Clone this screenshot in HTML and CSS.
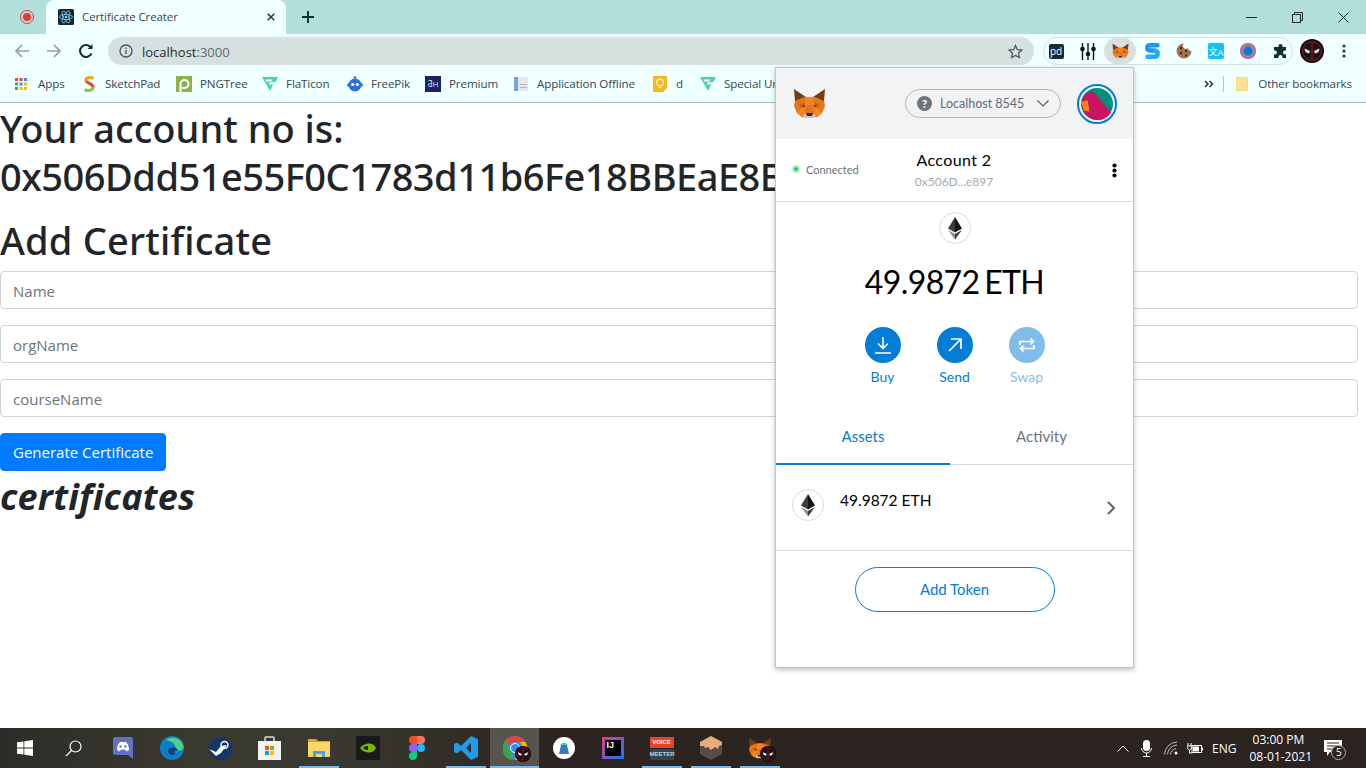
FILE: index.html
```html
<!DOCTYPE html>
<html>
	<head>
		<meta charset="utf-8">
		<title>Certificate Creater</title>
		<link rel="stylesheet" href="styles.css">
	</head>
	<body>
		<svg class="defs" width="0" height="0">
			<symbol id="fox" viewBox="0 0 33 31">
				<polygon points="1,1 13,9 11,14 2,13" fill="#763d16"/>
				<polygon points="32,1 20,9 22,14 31,13" fill="#763d16"/>
				<polygon points="2,13 1,18 4,25 9,29 24,29 29,25 32,18 31,13 22,9 11,9" fill="#e2761b"/>
				<polygon points="13,9 20,9 21,17 12,17" fill="#f6851b"/>
				<polygon points="4,25 9,18 13,17 12,25 9,29" fill="#f6851b"/>
				<polygon points="29,25 24,18 20,17 21,25 24,29" fill="#f6851b"/>
				<polygon points="6,16 12,15 12,19 8,20" fill="#cd6116"/>
				<polygon points="27,16 21,15 21,19 25,20" fill="#cd6116"/>
				<polygon points="9,18 12,17 11,19" fill="#233447"/>
				<polygon points="24,18 21,17 22,19" fill="#233447"/>
				<polygon points="10,27 14,25 19,25 23,27 21,30 12,30" fill="#d7c1b3"/>
				<polygon points="13,25 20,25 19,28 14,28" fill="#233447"/>
			</symbol>
			<symbol id="eth" viewBox="0 0 32 32">
				<circle cx="16" cy="16" r="15.500" fill="#fff" stroke="#d6d9dc"/>
				<polygon points="16,5 9,16.500 16,20.500" fill="#3c3c3d"/>
				<polygon points="16,5 23,16.500 16,20.500" fill="#141414"/>
				<polygon points="9,18 16,27.500 16,22" fill="#8c8c8c"/>
				<polygon points="23,18 16,27.500 16,22" fill="#3c3c3b"/>
			</symbol>
			<symbol id="deadpool" viewBox="0 0 24 24">
				<circle cx="12" cy="12" r="12" fill="#0d0a0c"/>
				<circle cx="12" cy="12" r="9.500" fill="#1c1114" stroke="#6e1420" stroke-width="1.500"/>
				<rect x="11" y="2" width="2" height="20" fill="#6e1420"/>
				<polygon points="4.500,9.500 10,12 9,14.500 5.500,13" fill="#fff"/>
				<polygon points="19.500,9.500 14,12 15,14.500 18.500,13" fill="#fff"/>
			</symbol>
		</svg>

		<div class="tabstrip">
			<div class="rec-tab"><span class="rec-dot"></span></div>
			<div class="tab">
				<svg class="favicon" width="16" height="16" viewBox="0 0 16 16">
					<rect width="16" height="16" rx="1.500" fill="#20232a"/>
					<g fill="none" stroke="#61dafb" stroke-width=".8">
						<ellipse cx="8" cy="8" rx="6.500" ry="2.600"/>
						<ellipse cx="8" cy="8" rx="6.500" ry="2.600" transform="rotate(60 8 8)"/>
						<ellipse cx="8" cy="8" rx="6.500" ry="2.600" transform="rotate(120 8 8)"/>
					</g>
					<circle cx="8" cy="8" r="1.300" fill="#61dafb"/>
				</svg>
				<span class="tab-title">Certificate Creater</span>
				<svg class="tab-close" width="8" height="8" viewBox="0 0 8 8"><path d="M.7.7l6.600 6.600M7.300.7L.7 7.300" stroke="#263a3a" stroke-width="1.600"/></svg>
			</div>
			<svg class="new-tab" width="12" height="12" viewBox="0 0 12 12"><path d="M6 0v12M0 6h12" stroke="#0f2e2e" stroke-width="2"/></svg>
			<div class="win-btns">
				<div class="win-btn"><svg width="11" height="11" viewBox="0 0 11 11"><path d="M0 5.500h11" stroke="#1c2b2b"/></svg></div>
				<div class="win-btn"><svg width="11" height="11" viewBox="0 0 11 11" fill="none" stroke="#1c2b2b"><rect x=".5" y="2.500" width="8" height="8"/><path d="M2.500 2.500v-2h8v8h-2"/></svg></div>
				<div class="win-btn"><svg width="11" height="11" viewBox="0 0 11 11"><path d="M.5.5l10 10M10.500.5l-10 10" stroke="#1c2b2b"/></svg></div>
			</div>
		</div>

		<div class="toolbar">
			<div class="nav-btn"><svg width="16" height="16" viewBox="0 0 16 16" fill="none" stroke="#8fa3a1" stroke-width="1.700"><path d="M15 8H2M8 2L2 8l6 6"/></svg></div>
			<div class="nav-btn"><svg width="16" height="16" viewBox="0 0 16 16" fill="none" stroke="#8fa3a1" stroke-width="1.700"><path d="M1 8h13M8 2l6 6-6 6"/></svg></div>
			<div class="nav-btn"><svg width="16" height="16" viewBox="0 0 16 16" fill="none" stroke="#0f2e2e" stroke-width="2"><path d="M13.500 10.500A6 6 0 1 1 13 4.500"/><path d="M14.500 1v5h-5z" fill="#0f2e2e" stroke="none"/></svg></div>
			<div class="omnibox">
				<svg width="14" height="14" viewBox="0 0 14 14" fill="none" stroke="#46565a" stroke-width="1.300"><circle cx="7" cy="7" r="6"/><path d="M7 6v4.200M7 3.600v1.400"/></svg>
				<span class="url">localhost<span class="url-port">:3000</span></span>
				<svg class="star" width="15" height="15" viewBox="0 0 16 16" fill="none" stroke="#46565a" stroke-width="1.300"><path d="M8 1.500l2 4.500 4.800.5-3.600 3.200 1 4.800L8 12.200l-4.200 2.300 1-4.800L1.200 6.500 6 6z"/></svg>
			</div>
			<div class="ext-pill">
				<div class="ext"><span class="ext-pd">pd</span></div>
				<div class="ext"><svg width="16" height="17" viewBox="0 0 16 17" stroke="#111" stroke-width="1.400"><path d="M2.500 0v17M8 0v17M13.500 0v17"/><circle cx="2.500" cy="6" r="1.600" fill="#111"/><circle cx="8" cy="11" r="1.600" fill="#111"/><circle cx="13.500" cy="6" r="1.600" fill="#111"/></svg></div>
				<div class="ext ext-active"><svg width="17" height="16"><use href="#fox"/></svg></div>
				<div class="ext"><svg width="15" height="16" viewBox="0 0 15 16" fill="none" stroke-width="4.400" stroke-linecap="round"><path d="M12.500 2.300H5Q2.300 2.300 2.300 4.800T5 7.500h5" stroke="#1e96f0"/><path d="M10 8q2.700 0 2.700 2.700T10 13.700H2.500" stroke="#28a8f5"/></svg></div>
				<div class="ext"><svg width="16" height="16" viewBox="0 0 16 16"><path d="M8 .5A7.500 7.500 0 1 0 15.500 8 3 3 0 0 1 12 5 3 3 0 0 1 8 .5z" fill="#a86f4c"/><g fill="#3a2417"><circle cx="5" cy="5" r="1.200"/><circle cx="10" cy="8" r="1.200"/><circle cx="5" cy="10" r="1.200"/><circle cx="10" cy="12.500" r="1"/></g></svg></div>
				<div class="ext"><span class="ext-trans"><span class="trans-zh">文</span><span class="trans-a">A</span></span></div>
				<div class="ext"><span class="ext-orb"></span></div>
				<div class="ext"><svg width="15" height="15" viewBox="0 0 15 15"><path d="M5.500 3V2a2 2 0 0 1 4 0v1H13v3.500h-1a2 2 0 0 0 0 4h1V14H9.500v-1a2 2 0 0 0-4 0v1H1v-3.500h1a2 2 0 0 0 0-4H1V3z" fill="#0f2e2e"/></svg></div>
			</div>
			<svg class="profile" width="24" height="24"><use href="#deadpool"/></svg>
			<svg class="menu-dots" width="4" height="14" viewBox="0 0 4 14" fill="#263a3a"><circle cx="2" cy="2" r="1.600"/><circle cx="2" cy="7" r="1.600"/><circle cx="2" cy="12" r="1.600"/></svg>
		</div>

		<div class="bookmarks">
			<div class="bm-list">
				<div class="bm">
					<svg width="12" height="12" viewBox="0 0 12 12"><g fill="#ea4335"><rect width="3" height="3"/><rect x="4.500" width="3" height="3"/></g><rect x="9" width="3" height="3" fill="#4285f4"/><rect y="4.500" width="3" height="3" fill="#34a853"/><rect x="4.500" y="4.500" width="3" height="3" fill="#4285f4"/><rect x="9" y="4.500" width="3" height="3" fill="#fbbc05"/><rect y="9" width="3" height="3" fill="#34a853"/><rect x="4.500" y="9" width="3" height="3" fill="#fbbc05"/><rect x="9" y="9" width="3" height="3" fill="#fbbc05"/></svg>
					<span>Apps</span>
				</div>
				<div class="bm">
					<svg width="12" height="16" viewBox="0 0 12 16" fill="none" stroke-width="3"><path d="M10.500 2.500C6 0 2 2 3 5" stroke="#f5a11c"/><path d="M3 5c1 2 7 3 7 6" stroke="#e8452c"/><path d="M10 11c0 4-6 4-8.500 2.500" stroke="#8cc43c"/></svg>
					<span>SketchPad</span>
				</div>
				<div class="bm">
					<svg width="16" height="16" viewBox="0 0 16 16"><rect width="16" height="16" fill="#8ab34a"/><path d="M4.500 16V8a4 4 0 1 1 4 4H6" fill="none" stroke="#fff" stroke-width="2"/></svg>
					<span>PNGTree</span>
				</div>
				<div class="bm">
					<svg width="16" height="16" viewBox="0 0 16 16"><path d="M0 1h16l-2.500 5H8L6.500 8.500H11L8 15z" fill="#40d9a0"/><path d="M3.500 3.500h7L9 5.500H4.500z" fill="#fff"/></svg>
					<span>FlaTicon</span>
				</div>
				<div class="bm">
					<svg width="16" height="16" viewBox="0 0 16 16"><circle cx="8" cy="9" r="6.500" fill="#2a6fdb"/><circle cx="8" cy="1.500" r="1.300" fill="#2a6fdb"/><rect x="0" y="7.500" width="16" height="3" rx="1.500" fill="#2a6fdb"/><circle cx="5.700" cy="8.500" r="1.600" fill="#fff"/><circle cx="10.300" cy="8.500" r="1.600" fill="#fff"/></svg>
					<span>FreePik</span>
				</div>
				<div class="bm">
					<span class="bm-dh">ƋH</span>
					<span>Premium</span>
				</div>
				<div class="bm">
					<svg width="16" height="16" viewBox="0 0 16 16"><rect x="1" y="1" width="14" height="14" fill="#e4e8ee"/><rect x="1" y="1" width="4" height="14" fill="#6ea6dc"/><rect x="7" y="8" width="7" height="1" fill="#b3bcc6"/><rect x="7" y="11" width="7" height="1" fill="#b3bcc6"/></svg>
					<span>Application Offline</span>
				</div>
				<div class="bm">
					<svg width="16" height="16" viewBox="0 0 16 16"><path d="M1 0h14v12l-4 4H1z" fill="#f6b81a"/><circle cx="8" cy="6.500" r="3.300" fill="none" stroke="#fff" stroke-width="1.200"/><path d="M6.500 11.500h3" stroke="#fff" stroke-width="1.200"/></svg>
					<span>d</span>
				</div>
				<div class="bm">
					<svg width="16" height="16" viewBox="0 0 16 16"><path d="M0 1h16l-2.500 5H8L6.500 8.500H11L8 15z" fill="#40d9a0"/><path d="M3.500 3.500h7L9 5.500H4.500z" fill="#fff"/></svg>
					<span>Special Ur</span>
				</div>
			</div>
			<div class="bm-right">
				<svg width="10" height="8" viewBox="0 0 10 8" fill="none" stroke="#263a3a" stroke-width="1.600"><path d="M1 1l3 3-3 3M5.500 1l3 3-3 3"/></svg>
				<span class="bm-sep"></span>
				<div class="bm">
					<svg width="12" height="14" viewBox="0 0 12 14"><path d="M0 0h10l2 2v12H0z" fill="#fde293" stroke="#f0c85a" stroke-width=".6"/></svg>
					<span>Other bookmarks</span>
				</div>
			</div>
		</div>

		<div class="page">
			<h1 class="heading">
				<span class="heading-line">Your account no is:</span>
				<span class="heading-line heading-addr">0x506Ddd51e55F0C1783d11b6Fe18BBEaE8E</span>
			</h1>
			<h1 class="heading add-title">Add Certificate</h1>
			<input class="field" type="text" placeholder="Name">
			<input class="field" type="text" placeholder="orgName">
			<input class="field" type="text" placeholder="courseName">
			<button class="generate">Generate Certificate</button>
			<h1 class="certs-title">certificates</h1>
		</div>

		<div class="mm-popup">
			<div class="mm-header">
				<svg class="mm-logo" width="33" height="31"><use href="#fox"/></svg>
				<div class="mm-network">
					<span class="mm-help">?</span>
					<span>Localhost 8545</span>
					<svg width="12" height="7" viewBox="0 0 12 7" fill="none" stroke="#555" stroke-width="1.100"><path d="M.5.5L6 6l5.500-5.500"/></svg>
				</div>
				<div class="mm-avatar">
					<svg width="32" height="32" viewBox="0 0 34 34">
						<circle cx="17" cy="17" r="17" fill="#008f7f"/>
						<path d="M3 8L12 3l20 23a17 17 0 0 1-15 8A17 17 0 0 1 1 14z" fill="#c9145f"/>
						<path d="M0 15l7-2 2 12-6-1z" fill="#f5890f"/>
					</svg>
				</div>
			</div>
			<div class="mm-account">
				<div class="mm-connected"><span class="mm-dot"></span>Connected</div>
				<div class="mm-acc-name">
					<div class="mm-acc-title">Account 2</div>
					<div class="mm-acc-addr">0x506D...e897</div>
				</div>
				<svg class="mm-more" width="5" height="15" viewBox="0 0 5 15"><circle cx="2.500" cy="2.500" r="2.100"/><circle cx="2.500" cy="7.500" r="2.100"/><circle cx="2.500" cy="12.500" r="2.100"/></svg>
			</div>
			<div class="mm-balance">
				<svg width="32" height="32"><use href="#eth"/></svg>
				<div class="mm-amount">49.9872 ETH</div>
				<div class="mm-actions">
					<div class="mm-action">
						<span class="mm-round"><svg width="16" height="17" viewBox="0 0 16 17" fill="none" stroke="#fff" stroke-width="1.600"><path d="M8 0v11M3 6.500l5 5 5-5M0 16h16"/></svg></span>
						Buy
					</div>
					<div class="mm-action">
						<span class="mm-round"><svg width="14" height="14" viewBox="0 0 14 14" fill="none" stroke="#fff" stroke-width="1.700"><path d="M1 13L13 1M3 1h10v10"/></svg></span>
						Send
					</div>
					<div class="mm-action mm-disabled">
						<span class="mm-round"><svg width="16" height="14" viewBox="0 0 16 14" fill="none" stroke="#fff" stroke-width="1.700"><path d="M1 7V3.500h13M11.500.5l3 3-3 3M15 7v3.500H2M4.500 7.500l-3 3 3 3"/></svg></span>
						Swap
					</div>
				</div>
			</div>
			<div class="mm-tabs">
				<div class="mm-tab mm-tab-on">Assets</div>
				<div class="mm-tab">Activity</div>
			</div>
			<div class="mm-asset">
				<svg width="32" height="32"><use href="#eth"/></svg>
				<span class="mm-asset-text">49.9872 ETH</span>
				<svg class="mm-chevron" width="9" height="14" viewBox="0 0 9 14" fill="none" stroke="#5f6b7a" stroke-width="2.200"><path d="M1 1l6 6-6 6"/></svg>
			</div>
			<div class="mm-add-wrap">
				<div class="mm-add">Add Token</div>
			</div>
		</div>

		<div class="taskbar">
			<div class="tb-start"><svg width="16" height="16" viewBox="0 0 16 16" fill="#fff"><path d="M0 2.300l6.500-.9v6.200H0zM7.300 1.300L16 0v7.600H7.300zM0 8.400h6.500v6.200L0 13.700zM7.300 8.400H16V16l-8.700-1.300z"/></svg></div>
			<div class="tb-item"><svg width="17" height="17" viewBox="0 0 17 17" fill="none" stroke="#fff" stroke-width="1.200"><circle cx="10.500" cy="6.500" r="5.500"/><path d="M6.500 10.500L.8 16.200"/></svg></div>
			<div class="tb-item"><svg width="20" height="22" viewBox="0 0 20 22"><path d="M2 0h16q2 0 2 2v20l-5-4H2q-2 0-2-2V2q0-2 2-2z" fill="#5f72c4"/><path d="M4 13q0-5 3-8h6q3 3 3 8-2 1.500-3 1l-1-1.500H8L7 14q-1 .5-3-1z" fill="#fff"/><circle cx="7.500" cy="9.500" r="1.200" fill="#5f72c4"/><circle cx="12.500" cy="9.500" r="1.200" fill="#5f72c4"/></svg></div>
			<div class="tb-item"><svg width="24" height="24" viewBox="0 0 24 24"><circle cx="12" cy="12" r="12" fill="#0c7fc4"/><path d="M6 4a11 11 0 0 1 17.500 6c1 5-6 6-8 3 1-6-6-8-9.500-9z" fill="#4fd08a"/><path d="M8 15c0-4 8-5 10-1-3 0-5 1-3 5-4 0-7-1-7-4z" fill="#123f7a"/></svg></div>
			<div class="tb-item"><svg width="23" height="23" viewBox="0 0 23 23"><circle cx="11.500" cy="11.500" r="11.500" fill="#12356a"/><path d="M0 12l7 3 5-6 6-1-6 8-5 3z" fill="#fff"/><circle cx="15.500" cy="8" r="3.500" fill="none" stroke="#fff" stroke-width="1.400"/></svg></div>
			<div class="tb-item"><svg width="23" height="24" viewBox="0 0 23 24"><path d="M7 5V2q0-1 1-1h7q1 0 1 1v3" fill="none" stroke="#ddd" stroke-width="1.500"/><path d="M0 5h23v19H0z" fill="#f2f2f2"/><rect x="7" y="10" width="4" height="4" fill="#f25022"/><rect x="12" y="10" width="4" height="4" fill="#7fba00"/><rect x="7" y="15" width="4" height="4" fill="#00a4ef"/><rect x="12" y="15" width="4" height="4" fill="#ffb900"/></svg></div>
			<div class="tb-item tb-open"><svg width="22" height="18" viewBox="0 0 22 18"><path d="M0 0h8l2 2h12v3H0z" fill="#e0a526"/><path d="M0 3h22v15H0z" fill="#fcd667"/><path d="M5 18v-6h12v6h-3v-3H8v3z" fill="#4aa3df"/></svg></div>
			<div class="tb-item"><svg width="24" height="24" viewBox="0 0 24 24"><rect width="24" height="24" fill="#1a1a1a"/><path d="M4 12q4-5 10-4.500v9Q8 17 4 12z" fill="#76b900"/><path d="M7 12q3-2.500 5-2v4q-2 .5-5-2z" fill="#1a1a1a"/><path d="M14 7.500q4 .5 6 4.500-2 4-6 4.500z" fill="#76b900"/></svg></div>
			<div class="tb-item"><svg width="16" height="24" viewBox="0 0 16 24"><path d="M8 0H4a4 4 0 0 0 0 8h4z" fill="#f24e1e"/><path d="M8 0h4a4 4 0 0 1 0 8H8z" fill="#ff7262"/><path d="M8 8H4a4 4 0 0 0 0 8h4z" fill="#a259ff"/><circle cx="12" cy="12" r="4" fill="#1abcfe"/><path d="M8 16H4a4 4 0 1 0 4 4z" fill="#0acf83"/></svg></div>
			<div class="tb-item tb-open"><svg width="24" height="24" viewBox="0 0 24 24"><path d="M17 0l7 3v18l-7 3L7 14l-4 3.500L0 16V8l3-1.500L7 10zM17 7l-5 5 5 5z" fill="#1f9cf0"/></svg></div>
			<div class="tb-item tb-open tb-active">
				<svg width="24" height="24" viewBox="0 0 24 24"><circle cx="12" cy="12" r="12" fill="#4285f4"/><path d="M12 0a12 12 0 0 1 10.400 6H12a6 6 0 0 0-5.400 3.300L2.500 4.500A12 12 0 0 1 12 0z" fill="#ea4335"/><path d="M2.500 4.500l4.600 8a6 6 0 0 0 4 5.500L8 24A12 12 0 0 1 2.500 4.500z" fill="#34a853"/><path d="M22.400 6A12 12 0 0 1 12 24l5-9a6 6 0 0 0 0-9z" fill="#fbbc05"/><circle cx="12" cy="12" r="4.500" fill="#4285f4" stroke="#fff"/></svg>
				<svg class="tb-badge" width="16" height="16"><use href="#deadpool"/></svg>
			</div>
			<div class="tb-item"><svg width="22" height="22" viewBox="0 0 22 22"><circle cx="11" cy="11" r="11" fill="#fff"/><path d="M6 17l2-9h6l2 9z" fill="#3a77c4"/><path d="M7 8q4-5 8 0z" fill="#3ddc84"/></svg></div>
			<div class="tb-item"><span class="tb-ij"><span class="tb-ij-in">IJ</span></span></div>
			<div class="tb-item tb-open"><div class="tb-voice"><span class="tb-voice-a">VOICE</span><span class="tb-voice-b">MEETER</span></div></div>
			<div class="tb-item tb-open"><svg width="22" height="24" viewBox="0 0 22 24"><path d="M11 0l11 6v12l-11 6L0 18V6z" fill="#5b4a4a"/><path d="M11 0l11 6v3l-3 1-1 3-3-2-4 3-3-3-3 1-1-2H0V6z" fill="#e3ae77"/></svg></div>
			<div class="tb-item tb-open">
				<svg width="24" height="22"><use href="#fox"/></svg>
				<svg class="tb-badge" width="16" height="16"><use href="#deadpool"/></svg>
			</div>
			<div class="tray">
				<svg class="tray-chev" width="12" height="7" viewBox="0 0 12 7" fill="none" stroke="#fff"><path d="M.5 6.500L6 1l5.500 5.500"/></svg>
				<svg class="tray-mic" width="11" height="17" viewBox="0 0 11 17"><rect x="2" y="0" width="7" height="11" rx="3.500" fill="#fff"/><path d="M.5 8a5 5 0 0 0 10 0M5.500 13v3M2 16.500h7" fill="none" stroke="#fff"/></svg>
				<svg class="tray-wifi" width="14" height="14" viewBox="0 0 14 14" fill="none" stroke="#bbb"><path d="M.5 13.500A13 13 0 0 1 13 1M3.500 13.500A10 10 0 0 1 13 4M6.500 13.500A7 7 0 0 1 12 7.500"/><circle cx="12" cy="12" r="1.500" fill="#fff" stroke="none"/></svg>
				<svg class="tray-batt" width="16" height="11" viewBox="0 0 16 11"><path d="M1 0v3M4 0v3M0 3h5v2L2.500 7 0 5zM2.500 7v3h3" fill="none" stroke="#fff"/><rect x="5" y="2.500" width="9.500" height="7" fill="none" stroke="#fff"/><rect x="6" y="3.500" width="6" height="5" fill="#fff"/><rect x="15" y="4.500" width="1" height="3" fill="#fff"/></svg>
				<span class="tray-lang">ENG</span>
				<div class="tray-clock">
					<div>03:00 PM</div>
					<div>08-01-2021</div>
				</div>
				<div class="tray-notif">
					<svg width="18" height="16" viewBox="0 0 18 16"><path d="M0 0h18v12H6l-3 4v-4H0z" fill="#fff"/><path d="M3 3h12M3 6h12M3 9h8" stroke="#2a2320"/></svg>
					<span class="notif-count">5</span>
				</div>
			</div>
		</div>
	</body>
</html>
```

FILE: styles.css
```css
* {
	box-sizing: border-box;
}

html, body {
	margin: 0;
	padding: 0;
	height: 768px;
	overflow: hidden;
	background: #fff;
}

body {
	display: flex;
	flex-direction: column;
	position: relative;
	font-family: "Open Sans", "Noto Sans", sans-serif;
}

.defs {
	position: absolute;
}

svg {
	display: block;
	flex-shrink: 0;
}

/* tabs */
.tabstrip {
	display: flex;
	align-items: center;
	height: 34px;
	background: #b2dfdb;
}

.rec-tab {
	display: flex;
	justify-content: center;
	align-items: center;
	width: 46px;
	padding-left: 8px;
}

.rec-dot {
	width: 14px;
	height: 14px;
	padding: 2px;
	border-radius: 50%;
	border: 1px solid #e53935;
	background: #e53935;
	background-clip: content-box;
}

.tab {
	display: flex;
	align-items: center;
	align-self: flex-end;
	width: 240px;
	height: 34px;
	padding: 0 11px 0 12px;
	background: #f0ffff;
	border-radius: 8px 8px 0 0;
}

.tab-title {
	flex: 1;
	margin: 0 0 2px 8px;
	font-size: 11.5px;
	letter-spacing: -.1px;
	color: #37474f;
}

.new-tab {
	margin-left: 16px;
}

.win-btns {
	display: flex;
	margin-left: auto;
}

.win-btn {
	display: flex;
	justify-content: center;
	align-items: center;
	width: 46px;
	height: 28px;
}

/* toolbar */
.toolbar {
	display: flex;
	align-items: center;
	height: 34px;
	padding-left: 6px;
	background: #f0ffff;
}

.nav-btn {
	display: flex;
	justify-content: center;
	width: 32px;
}

.omnibox {
	display: flex;
	align-items: center;
	width: 926px;
	height: 28px;
	margin-left: 6px;
	padding: 0 11px;
	background: #d5e0df;
	border-radius: 14px;
}

.url {
	margin: 1px 0 0 9px;
	font-size: 13px;
	color: #202f33;
}

.url-port {
	color: #5a6b70;
}

.star {
	margin-left: auto;
}

.ext-pill {
	display: flex;
	justify-content: center;
	align-items: center;
	width: 250px;
	height: 28px;
	margin-left: 9px;
	border: 1px solid #d5e0df;
	border-radius: 14px;
}

.ext {
	display: flex;
	justify-content: center;
	align-items: center;
	flex-shrink: 0;
	width: 32px;
	height: 28px;
}

.ext-active {
	background: #d5e0df;
	border-radius: 50%;
}

.ext-pd {
	display: block;
	width: 15px;
	height: 15px;
	background: #16293d;
	border-radius: 2px;
	color: #fff;
	font-size: 10px;
	line-height: 14px;
	text-align: center;
}

.ext-trans {
	display: flex;
	align-items: center;
	justify-content: center;
	width: 16px;
	height: 16px;
	background: #16c1f3;
	border-radius: 2px;
	color: #fff;
	font-size: 9px;
	font-family: "Noto Sans CJK SC", sans-serif;
	overflow: hidden;
}

.trans-a {
	font-family: "Liberation Sans", sans-serif;
	margin-top: 4px;
}

.ext-orb {
	display: block;
	width: 16px;
	height: 16px;
	border-radius: 50%;
	background: radial-gradient(circle closest-side at 50% 50%, #0e70c9 40%, #3fa3e8 65%, #f06a3a 82%, #b040c0 100%);
}

.profile {
	margin-left: 7px;
}

.menu-dots {
	margin-left: 18px;
}

/* bookmarks */
.bookmarks {
	display: flex;
	align-items: center;
	height: 35px;
	padding: 0 0 2px 15px;
	background: #f0ffff;
	border-bottom: 1px solid #a9bcbc;
	font-size: 11.6px;
	letter-spacing: -.1px;
	color: #37474f;
}

.bm-list {
	display: grid;
	grid-template-columns: 68px 93px 86px 85px 78px 88px 139px 48px 100px;
}

.bm {
	display: flex;
	align-items: center;
	gap: 8px;
	white-space: nowrap;
}

.bm span {
	margin-bottom: 1px;
}

.bm:first-child {
	gap: 11px;
}

.bm:nth-child(2) {
	gap: 10px;
}

.bm .bm-dh {
	display: block;
	width: 16px;
	height: 16px;
	margin: 0;
	background: #1a2366;
	color: #dfe3f5;
	font-size: 8px;
	line-height: 16px;
	text-align: center;
}

.bm-right {
	display: flex;
	align-items: center;
	margin-left: auto;
	padding-right: 14px;
}

.bm-sep {
	width: 1px;
	height: 16px;
	margin: 0 12px 0 9px;
	background: #b6c4c4;
}

.bm-right .bm {
	gap: 10px;
}

/* page */
.page {
	flex: 1;
	padding-right: 8px;
	color: #212529;
}

.heading {
	margin: 1px 0 16px;
	font-family: "Noto Sans", sans-serif;
	font-size: 38px;
	font-weight: 500;
	line-height: 48px;
}

.heading-line {
	display: block;
	white-space: nowrap;
}

.heading-addr {
	letter-spacing: -.5px;
}

.add-title {
	margin: 0 0 7px;
	letter-spacing: .2px;
}

.field {
	display: block;
	width: 100%;
	height: 38px;
	margin-bottom: 16px;
	padding: 7px 12px 5px;
	border: 1px solid #ced4da;
	border-radius: 4px;
	font-family: inherit;
	font-size: 15px;
	color: #495057;
}

.field::placeholder {
	color: #6c757d;
}

.generate {
	display: block;
	height: 38px;
	padding: 0 12px;
	border: 1px solid #007bff;
	border-radius: 4px;
	background: #007bff;
	font-family: inherit;
	font-size: 15px;
	color: #fff;
}

.certs-title {
	margin: 2px 0 0;
	font-size: 36px;
	font-style: italic;
	font-weight: 700;
	letter-spacing: .2px;
	line-height: 48px;
}

/* metamask popup */
.mm-popup {
	position: absolute;
	left: 775px;
	top: 67px;
	width: 359px;
	height: 601px;
	background: #fff;
	border: 1px solid #bfc4c4;
	box-shadow: 0 2px 5px rgba(0, 0, 0, .25);
	font-family: Lato, sans-serif;
	color: #000;
}

.mm-header {
	display: flex;
	align-items: center;
	height: 71px;
	padding: 0 16px 0 17px;
	background: #f2f3f4;
}

.mm-network {
	display: flex;
	align-items: center;
	gap: 8px;
	width: 156px;
	height: 29px;
	margin-left: auto;
	padding: 0 11px;
	border: 1px solid #b4b8bc;
	border-radius: 15px;
	font-size: 12.5px;
	white-space: nowrap;
	color: #5f6b7a;
}

.mm-network svg {
	margin-left: auto;
}

.mm-help {
	flex: none;
	width: 15px;
	height: 15px;
	border-radius: 50%;
	background: #6f7479;
	color: #fff;
	font-size: 11px;
	font-weight: 900;
	line-height: 15px;
	text-align: center;
}

.mm-avatar {
	width: 40px;
	height: 40px;
	margin-left: 16px;
	padding: 2px;
	border: 2px solid #037dd6;
	border-radius: 50%;
}

.mm-account {
	display: flex;
	align-items: center;
	height: 63px;
	padding: 0 16px;
	border-bottom: 1px solid #d6d9dc;
}

.mm-connected {
	display: flex;
	align-items: center;
	gap: 6px;
	width: 122px;
	margin-top: -2px;
	font-size: 11px;
	color: #6a737d;
}

.mm-dot {
	width: 8px;
	height: 8px;
	border-radius: 50%;
	background: #28c76f;
	border: 2px solid #b4eecb;
}

.mm-acc-name {
	width: 80px;
	white-space: nowrap;
	text-align: center;
}

.mm-acc-title {
	margin-top: -2px;
	font-size: 16px;
	letter-spacing: .4px;
	line-height: 20px;
}

.mm-acc-addr {
	margin-top: 4px;
	font-size: 12px;
	color: #a4a9ae;
}

.mm-more {
	margin-left: auto;
}

.mm-balance {
	display: flex;
	flex-direction: column;
	align-items: center;
	height: 209px;
	padding-top: 10px;
}

.mm-amount {
	margin-top: 16px;
	font-size: 32px;
	letter-spacing: -.6px;
	word-spacing: -3px;
	line-height: 44px;
}

.mm-actions {
	display: flex;
	gap: 36px;
	margin-top: 23px;
}

.mm-action {
	display: flex;
	flex-direction: column;
	align-items: center;
	gap: 5px;
	width: 36px;
	font-size: 14px;
	color: #037dd6;
}

.mm-round {
	display: flex;
	justify-content: center;
	align-items: center;
	flex: none;
	width: 36px;
	height: 36px;
	border-radius: 50%;
	background: #037dd6;
}

.mm-disabled {
	opacity: .5;
}

.mm-tabs {
	display: flex;
	height: 54px;
	border-bottom: 1px solid #d6d9dc;
}

.mm-tab {
	flex: 1;
	padding-top: 16px;
	font-size: 15px;
	text-align: center;
	color: #6a737d;
}

.mm-tab-on {
	flex: none;
	width: 174px;
	border-bottom: 2px solid #037dd6;
	margin-bottom: -1px;
	color: #037dd6;
}

.mm-asset {
	display: flex;
	align-items: center;
	height: 86px;
	padding: 0 16px 6px;
	border-bottom: 1px solid #d6d9dc;
}

.mm-asset-text {
	margin: 0 0 10px 16px;
	font-size: 15.5px;
}

.mm-chevron {
	margin: 6px 1px 0 auto;
}

.mm-add-wrap {
	display: flex;
	justify-content: center;
	padding-top: 16px;
}

.mm-add {
	width: 200px;
	height: 45px;
	border: 1px solid #037dd6;
	border-radius: 23px;
	font-size: 15px;
	line-height: 42px;
	text-align: center;
	color: #037dd6;
}

/* taskbar */
.taskbar {
	display: flex;
	align-items: center;
	height: 40px;
	background: linear-gradient(90deg, #2d2b27 0, #3b3a30 200px, #3a3830 330px, #2b2420 560px, #2a2320 100%);
	color: #fff;
	font-size: 12px;
}

.tb-start {
	display: flex;
	justify-content: center;
	align-items: center;
	width: 49px;
	height: 40px;
}

.tb-item {
	display: flex;
	justify-content: center;
	align-items: center;
	position: relative;
	width: 49px;
	height: 40px;
}

.tb-open::after {
	content: "";
	position: absolute;
	left: 5px;
	right: 4px;
	bottom: 0;
	height: 2px;
	background: #76b9ed;
}

.tb-active {
	background: #57534f;
}

.tb-active::after {
	left: 0;
	right: 0;
}

.tb-badge {
	position: absolute;
	left: 25px;
	top: 18px;
}

.tb-ij {
	display: flex;
	justify-content: center;
	align-items: center;
	width: 22px;
	height: 22px;
	background: linear-gradient(135deg, #f5317f, #087cfa);
}

.tb-ij-in {
	width: 16px;
	height: 16px;
	background: #000;
	font-family: "Liberation Sans", sans-serif;
	font-size: 9px;
	font-weight: 700;
	line-height: 11px;
	padding-left: 2px;
}

.tb-voice {
	display: flex;
	flex-direction: column;
	width: 24px;
	font-family: "Liberation Sans", sans-serif;
	font-size: 6px;
	font-weight: 700;
	line-height: 11px;
	text-align: center;
}

.tb-voice-a {
	background: #e9432a;
}

.tb-voice-b {
	margin-top: 1px;
	background: #2f4658;
	color: #c3ced6;
}

.tray {
	display: flex;
	align-items: center;
	flex: 1;
	height: 40px;
	padding-left: 333px;
}

.tray-mic {
	margin-left: 12px;
}

.tray-wifi {
	margin-left: 12px;
}

.tray-batt {
	margin-left: 9px;
}

.tray-lang {
	margin-left: 9px;
}

.tray-clock {
	margin-left: 13px;
	width: 58px;
	line-height: 17px;
	text-align: center;
	white-space: nowrap;
}

.tray-notif {
	position: relative;
	margin-left: 17px;
}

.notif-count {
	position: absolute;
	left: 7px;
	top: 5px;
	width: 15px;
	height: 15px;
	background: #2a2320;
	border: 1px solid #aaa;
	border-radius: 50%;
	font-size: 10px;
	line-height: 13px;
	text-align: center;
}
```
